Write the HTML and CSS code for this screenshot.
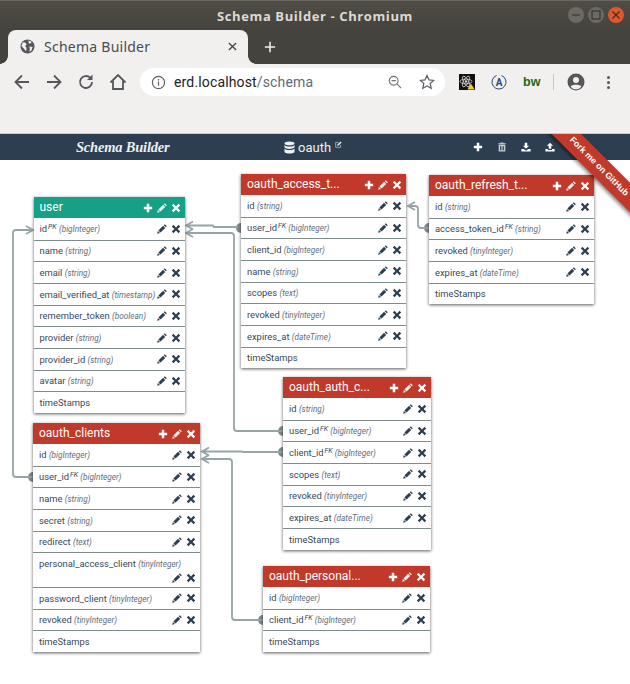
FILE: index.html
```html
<!DOCTYPE html>
<html lang="en">
<head>
    <meta charset="UTF-8">
    <meta name="viewport" content="width=device-width, initial-scale=1.0">
    <title>Schema Builder</title>
    <link rel="stylesheet" href="styles.css">
</head>
<body>
    <svg class="sprite" width="0" height="0">
        <symbol id="i-plus" viewBox="0 0 12 12"><path d="M4.5 1h3v3.5H11v3H7.5V11h-3V7.5H1v-3h3.5z"/></symbol>
        <symbol id="i-pencil" viewBox="0 0 12 12"><path d="M9.300.2l2.500 2.500-1.200 1.200-2.500-2.500zM7.300 2.200l2.500 2.500-5.600 5.600-2.500-2.500zM1.100 8.400l2.500 2.500-3.400.9z"/></symbol>
        <symbol id="i-remove" viewBox="0 0 12 12"><path d="M2.900 1L6 4.100 9.100 1 11 2.900 7.900 6 11 9.100 9.100 11 6 7.900 2.900 11 1 9.100 4.100 6 1 2.900z"/></symbol>
        <symbol id="i-trash" viewBox="0 0 12 12"><path d="M4.500.5h3l.5 1h2.500v1.200h-9V1.500H4zM2 3.400h8V11.500H2zM3.800 5v5h1V5zm1.700 0v5h1V5zm1.700 0v5h1V5z" fill-rule="evenodd"/></symbol>
        <symbol id="i-download" viewBox="0 0 12 12"><path d="M4.500 1h3v3.500h2.200L6 8.200 2.300 4.500h2.200zM.5 8.500h2.800L6 10.500l2.700-2h2.800V11.500H.5z"/></symbol>
        <symbol id="i-upload" viewBox="0 0 12 12"><path d="M6 .8l3.700 3.700H7.500V8h-3V4.500H2.300zM.5 8.500h3V9.500h5V8.500h3V11.500H.5z"/></symbol>
    </svg>

    <div class="titlebar">
        <span class="window-title">Schema Builder - Chromium</span>
        <div class="window-buttons">
            <span class="win-btn"><svg viewBox="0 0 16 16"><path d="M4 8h8" /></svg></span>
            <span class="win-btn"><svg viewBox="0 0 16 16"><rect x="4" y="4" width="8" height="8"/></svg></span>
            <span class="win-btn win-close"><svg viewBox="0 0 16 16"><path d="M4.500 4.500l7 7M11.500 4.500l-7 7"/></svg></span>
        </div>
    </div>

    <div class="tabstrip">
        <div class="tab">
            <svg class="tab-globe" viewBox="0 0 16 16"><circle cx="8" cy="8" r="7.500" fill="#54565a"/><path d="M3 3.500l3 .5 1 2-1.500 1.500L7 9.500l-.5 3.500L4 10 1.500 7.500zM9 1.500l3.500 1.500-1 1.500-2 .5zM10 8l3.500.5L12 12.500l-2 1 .5-3z" fill="#f1f0ef"/></svg>
            <span class="tab-title">Schema Builder</span>
            <svg class="tab-close" viewBox="0 0 10 10"><path d="M1 1l8 8M9 1l-8 8"/></svg>
        </div>
        <svg class="new-tab" viewBox="0 0 14 14"><path d="M7 1v12M1 7h12"/></svg>
    </div>

    <div class="toolbar">
        <svg class="tool" viewBox="0 0 18 18"><path d="M16 9H3M9 2.500L2.500 9 9 15.500"/></svg>
        <svg class="tool" viewBox="0 0 18 18"><path d="M2 9h13M9 2.500L15.500 9 9 15.500"/></svg>
        <svg class="tool" viewBox="0 0 18 18"><path d="M15 9a6 6 0 1 1-1.800-4.300"/><path class="tool-fill" d="M15.500 1.500v5.500H10z"/></svg>
        <svg class="tool" viewBox="0 0 18 18"><path d="M1.500 9.500L9 2l7.500 7.500M4 8v8h10V8"/></svg>
        <div class="omnibox">
            <svg class="omni-info" viewBox="0 0 16 16"><circle cx="8" cy="8" r="6.500"/><path d="M8 7v4.500M8 4.200v1.600"/></svg>
            <span class="url">erd.localhost<span class="url-path">/schema</span></span>
            <svg class="omni-zoom" viewBox="0 0 16 16"><circle cx="6.500" cy="6.500" r="5"/><path d="M4 6.500h5M10.200 10.200L15 15"/></svg>
            <svg class="omni-star" viewBox="0 0 16 16"><path d="M8 1.500l2 4.400 4.700.5-3.500 3.200 1 4.700L8 11.900l-4.200 2.400 1-4.700L1.300 6.400 6 5.900z"/></svg>
        </div>
        <div class="ext-icons">
            <span class="ext ext-react">
                <svg viewBox="0 0 16 16"><g fill="none" stroke="#d8d8d8" stroke-width=".8"><ellipse cx="7" cy="7.500" rx="6" ry="2.400"/><ellipse cx="7" cy="7.500" rx="6" ry="2.400" transform="rotate(60 7 7.500)"/><ellipse cx="7" cy="7.500" rx="6" ry="2.400" transform="rotate(120 7 7.500)"/></g><circle cx="7" cy="7.500" r="1.200" fill="#d8d8d8"/><path d="M12 9.500l3.600 6H8.400z" fill="#f2d024"/></svg>
            </span>
            <svg class="ext" viewBox="0 0 16 16"><path d="M5.500 1.500a7 7 0 1 0 5 0" fill="none" stroke="#2b4a78" stroke-width="1"/><text x="8" y="11.500" class="ext-a">A</text></svg>
            <span class="ext ext-bw">bw</span>
            <span class="tool-divider"></span>
            <svg class="ext ext-avatar" viewBox="0 0 18 18"><circle cx="9" cy="9" r="8.500" fill="#54565a"/><circle cx="9" cy="7" r="3" fill="#f1f0ef"/><path d="M3.500 13.500c1.500-2.500 9.500-2.500 11 0-1.500 2-3.500 2.800-5.500 2.800s-4-.8-5.500-2.800z" fill="#f1f0ef"/></svg>
            <span class="kebab"><i></i><i></i><i></i></span>
        </div>
    </div>

    <div class="page">
        <nav class="topnav">
            <div class="brand">Schema Builder</div>
            <div class="db-name">
                <svg class="db-icon" viewBox="0 0 12 14"><path d="M6 .5c3 0 5.500.8 5.500 2s-2.500 2-5.500 2-5.500-.8-5.500-2 2.500-2 5.500-2zM.5 4.200C1.500 5.400 3.500 5.800 6 5.800s4.500-.4 5.500-1.600v2.300c0 1.200-2.500 2-5.500 2s-5.500-.8-5.500-2zM.5 8.100C1.500 9.300 3.500 9.700 6 9.700s4.500-.4 5.500-1.600v3.400c0 1.200-2.500 2-5.500 2s-5.500-.8-5.500-2z"/></svg>
                <span>oauth</span>
                <svg class="edit-icon" viewBox="0 0 10 10"><path d="M8 5.500V9H1V2h4" fill="none" stroke="currentColor" stroke-width=".8"/><path d="M3.500 5L8 .6 9.500 2 5 6.500l-2 .4z"/></svg>
            </div>
            <div class="nav-actions">
                <svg class="ico"><use href="#i-plus"/></svg>
                <svg class="ico ico-muted"><use href="#i-trash"/></svg>
                <svg class="ico"><use href="#i-download"/></svg>
                <svg class="ico"><use href="#i-upload"/></svg>
            </div>
        </nav>

        <div class="ribbon">Fork me on GitHub</div>

        <main class="canvas">
            <!-- relations, drawn in page coordinates -->
            <svg class="links" width="630" height="524" viewBox="0 160 630 524">
                <g class="dots">
                    <circle cx="33" cy="477" r="5"/>
                    <circle cx="241" cy="228" r="5"/>
                    <circle cx="283" cy="431" r="5"/>
                    <circle cx="283" cy="452" r="5"/>
                    <circle cx="263" cy="620" r="5"/>
                    <circle cx="429" cy="228" r="5"/>
                </g>
                <g class="wires">
                    <path d="M33 477H16q-3 0-3-3V233q0-3 3-3H33M26 226l7 4-7 4"/>
                    <path d="M238 227H214l-1-1.500H186M193 221.500l-7 4 7 4"/>
                    <path d="M283 431H237q-3 0-3-3V236q0-3-3-3H186M193 229l-7 4 7 4"/>
                    <path d="M283 452H243l-1-.500H202M209 447.500l-7 4 7 4"/>
                    <path d="M263 620H235q-3 0-3-3V462q0-3-3-3H202M209 455l-7 4 7 4"/>
                    <path d="M429 228H421q-3 0-3-3V209q0-3-3-3H408M415 202l-7 4 7 4"/>
                </g>
            </svg>

            <section class="tbl tbl-user">
                <header class="tbl-head tbl-head-green">
                    <span class="tbl-name">user</span>
                    <span class="acts"><svg class="ico"><use href="#i-plus"/></svg><svg class="ico"><use href="#i-pencil"/></svg><svg class="ico"><use href="#i-remove"/></svg></span>
                </header>
                <div class="row"><span>id<sup>PK</sup> <em>(bigInteger)</em></span><span class="acts"><svg class="ico"><use href="#i-pencil"/></svg><svg class="ico"><use href="#i-remove"/></svg></span></div>
                <div class="row"><span>name <em>(string)</em></span><span class="acts"><svg class="ico"><use href="#i-pencil"/></svg><svg class="ico"><use href="#i-remove"/></svg></span></div>
                <div class="row"><span>email <em>(string)</em></span><span class="acts"><svg class="ico"><use href="#i-pencil"/></svg><svg class="ico"><use href="#i-remove"/></svg></span></div>
                <div class="row"><span>email_verified_at <em>(timestamp)</em></span><span class="acts"><svg class="ico"><use href="#i-pencil"/></svg><svg class="ico"><use href="#i-remove"/></svg></span></div>
                <div class="row"><span>remember_token <em>(boolean)</em></span><span class="acts"><svg class="ico"><use href="#i-pencil"/></svg><svg class="ico"><use href="#i-remove"/></svg></span></div>
                <div class="row"><span>provider <em>(string)</em></span><span class="acts"><svg class="ico"><use href="#i-pencil"/></svg><svg class="ico"><use href="#i-remove"/></svg></span></div>
                <div class="row"><span>provider_id <em>(string)</em></span><span class="acts"><svg class="ico"><use href="#i-pencil"/></svg><svg class="ico"><use href="#i-remove"/></svg></span></div>
                <div class="row"><span>avatar <em>(string)</em></span><span class="acts"><svg class="ico"><use href="#i-pencil"/></svg><svg class="ico"><use href="#i-remove"/></svg></span></div>
                <div class="row"><span>timeStamps</span></div>
            </section>

            <section class="tbl tbl-clients">
                <header class="tbl-head">
                    <span class="tbl-name">oauth_clients</span>
                    <span class="acts"><svg class="ico"><use href="#i-plus"/></svg><svg class="ico"><use href="#i-pencil"/></svg><svg class="ico"><use href="#i-remove"/></svg></span>
                </header>
                <div class="row"><span>id <em>(bigInteger)</em></span><span class="acts"><svg class="ico"><use href="#i-pencil"/></svg><svg class="ico"><use href="#i-remove"/></svg></span></div>
                <div class="row"><span>user_id<sup>FK</sup> <em>(bigInteger)</em></span><span class="acts"><svg class="ico"><use href="#i-pencil"/></svg><svg class="ico"><use href="#i-remove"/></svg></span></div>
                <div class="row"><span>name <em>(string)</em></span><span class="acts"><svg class="ico"><use href="#i-pencil"/></svg><svg class="ico"><use href="#i-remove"/></svg></span></div>
                <div class="row"><span>secret <em>(string)</em></span><span class="acts"><svg class="ico"><use href="#i-pencil"/></svg><svg class="ico"><use href="#i-remove"/></svg></span></div>
                <div class="row"><span>redirect <em>(text)</em></span><span class="acts"><svg class="ico"><use href="#i-pencil"/></svg><svg class="ico"><use href="#i-remove"/></svg></span></div>
                <div class="row"><span>personal_access_client <em>(tinyInteger)</em></span><span class="acts"><svg class="ico"><use href="#i-pencil"/></svg><svg class="ico"><use href="#i-remove"/></svg></span></div>
                <div class="row"><span>password_client <em>(tinyInteger)</em></span><span class="acts"><svg class="ico"><use href="#i-pencil"/></svg><svg class="ico"><use href="#i-remove"/></svg></span></div>
                <div class="row"><span>revoked <em>(tinyInteger)</em></span><span class="acts"><svg class="ico"><use href="#i-pencil"/></svg><svg class="ico"><use href="#i-remove"/></svg></span></div>
                <div class="row"><span>timeStamps</span></div>
            </section>

            <section class="tbl tbl-access">
                <header class="tbl-head">
                    <span class="tbl-name">oauth_access_t...</span>
                    <span class="acts"><svg class="ico"><use href="#i-plus"/></svg><svg class="ico"><use href="#i-pencil"/></svg><svg class="ico"><use href="#i-remove"/></svg></span>
                </header>
                <div class="row"><span>id <em>(string)</em></span><span class="acts"><svg class="ico"><use href="#i-pencil"/></svg><svg class="ico"><use href="#i-remove"/></svg></span></div>
                <div class="row"><span>user_id<sup>FK</sup> <em>(bigInteger)</em></span><span class="acts"><svg class="ico"><use href="#i-pencil"/></svg><svg class="ico"><use href="#i-remove"/></svg></span></div>
                <div class="row"><span>client_id <em>(bigInteger)</em></span><span class="acts"><svg class="ico"><use href="#i-pencil"/></svg><svg class="ico"><use href="#i-remove"/></svg></span></div>
                <div class="row"><span>name <em>(string)</em></span><span class="acts"><svg class="ico"><use href="#i-pencil"/></svg><svg class="ico"><use href="#i-remove"/></svg></span></div>
                <div class="row"><span>scopes <em>(text)</em></span><span class="acts"><svg class="ico"><use href="#i-pencil"/></svg><svg class="ico"><use href="#i-remove"/></svg></span></div>
                <div class="row"><span>revoked <em>(tinyInteger)</em></span><span class="acts"><svg class="ico"><use href="#i-pencil"/></svg><svg class="ico"><use href="#i-remove"/></svg></span></div>
                <div class="row"><span>expires_at <em>(dateTime)</em></span><span class="acts"><svg class="ico"><use href="#i-pencil"/></svg><svg class="ico"><use href="#i-remove"/></svg></span></div>
                <div class="row"><span>timeStamps</span></div>
            </section>

            <section class="tbl tbl-refresh">
                <header class="tbl-head">
                    <span class="tbl-name">oauth_refresh_t...</span>
                    <span class="acts"><svg class="ico"><use href="#i-plus"/></svg><svg class="ico"><use href="#i-pencil"/></svg><svg class="ico"><use href="#i-remove"/></svg></span>
                </header>
                <div class="row"><span>id <em>(string)</em></span><span class="acts"><svg class="ico"><use href="#i-pencil"/></svg><svg class="ico"><use href="#i-remove"/></svg></span></div>
                <div class="row"><span>access_token_id<sup>FK</sup> <em>(string)</em></span><span class="acts"><svg class="ico"><use href="#i-pencil"/></svg><svg class="ico"><use href="#i-remove"/></svg></span></div>
                <div class="row"><span>revoked <em>(tinyInteger)</em></span><span class="acts"><svg class="ico"><use href="#i-pencil"/></svg><svg class="ico"><use href="#i-remove"/></svg></span></div>
                <div class="row"><span>expires_at <em>(dateTime)</em></span><span class="acts"><svg class="ico"><use href="#i-pencil"/></svg><svg class="ico"><use href="#i-remove"/></svg></span></div>
                <div class="row"><span>timeStamps</span></div>
            </section>

            <section class="tbl tbl-auth">
                <header class="tbl-head">
                    <span class="tbl-name">oauth_auth_c...</span>
                    <span class="acts"><svg class="ico"><use href="#i-plus"/></svg><svg class="ico"><use href="#i-pencil"/></svg><svg class="ico"><use href="#i-remove"/></svg></span>
                </header>
                <div class="row"><span>id <em>(string)</em></span><span class="acts"><svg class="ico"><use href="#i-pencil"/></svg><svg class="ico"><use href="#i-remove"/></svg></span></div>
                <div class="row"><span>user_id<sup>FK</sup> <em>(bigInteger)</em></span><span class="acts"><svg class="ico"><use href="#i-pencil"/></svg><svg class="ico"><use href="#i-remove"/></svg></span></div>
                <div class="row"><span>client_id<sup>FK</sup> <em>(bigInteger)</em></span><span class="acts"><svg class="ico"><use href="#i-pencil"/></svg><svg class="ico"><use href="#i-remove"/></svg></span></div>
                <div class="row"><span>scopes <em>(text)</em></span><span class="acts"><svg class="ico"><use href="#i-pencil"/></svg><svg class="ico"><use href="#i-remove"/></svg></span></div>
                <div class="row"><span>revoked <em>(tinyInteger)</em></span><span class="acts"><svg class="ico"><use href="#i-pencil"/></svg><svg class="ico"><use href="#i-remove"/></svg></span></div>
                <div class="row"><span>expires_at <em>(dateTime)</em></span><span class="acts"><svg class="ico"><use href="#i-pencil"/></svg><svg class="ico"><use href="#i-remove"/></svg></span></div>
                <div class="row"><span>timeStamps</span></div>
            </section>

            <section class="tbl tbl-personal">
                <header class="tbl-head">
                    <span class="tbl-name">oauth_personal...</span>
                    <span class="acts"><svg class="ico"><use href="#i-plus"/></svg><svg class="ico"><use href="#i-pencil"/></svg><svg class="ico"><use href="#i-remove"/></svg></span>
                </header>
                <div class="row"><span>id <em>(bigInteger)</em></span><span class="acts"><svg class="ico"><use href="#i-pencil"/></svg><svg class="ico"><use href="#i-remove"/></svg></span></div>
                <div class="row"><span>client_id<sup>FK</sup> <em>(bigInteger)</em></span><span class="acts"><svg class="ico"><use href="#i-pencil"/></svg><svg class="ico"><use href="#i-remove"/></svg></span></div>
                <div class="row"><span>timeStamps</span></div>
            </section>
        </main>
    </div>
</body>
</html>
```

FILE: styles.css
```css
* {
    margin: 0;
    padding: 0;
    box-sizing: border-box;
}

html, body {
    height: 684px;
    overflow: hidden;
}

body {
    background-color: #ffffff;
    font-family: Roboto, 'Liberation Sans', sans-serif;
    color: #2c3e50;
    display: flex;
    flex-direction: column;
}

.sprite {
    display: block;
    height: 0;
}

/* window chrome */
.titlebar {
    height: 30px;
    flex: none;
    display: flex;
    align-items: center;
    justify-content: center;
    position: relative;
    background: linear-gradient(#504d46, #45433d);
    border-top: 1px solid #6a675f;
}

.window-title {
    font-family: 'Open Sans', sans-serif;
    font-size: 13px;
    font-weight: 700;
    letter-spacing: 0.6px;
    color: #dcdad5;
}

.window-buttons {
    position: absolute;
    right: 6px;
    top: 6px;
    display: flex;
    gap: 4px;
}

.win-btn {
    width: 16px;
    height: 16px;
    border-radius: 50%;
    background: #6c6a64;
    display: block;
}

.win-btn svg {
    display: block;
    fill: none;
    stroke: #35342f;
    stroke-width: 1.2;
}

.win-close {
    background: #e2562a;
}

.tabstrip {
    height: 34px;
    flex: none;
    background: #45433d;
    display: flex;
    align-items: flex-end;
    padding-left: 8px;
}

.tab {
    width: 240px;
    height: 34px;
    position: relative;
    background: #f1f0ef;
    border-radius: 8px 8px 0 0;
    display: flex;
    align-items: center;
    padding: 0 10px 1px 12px;
}

.tab::before,
.tab::after {
    content: "";
    position: absolute;
    bottom: 0;
    width: 8px;
    height: 8px;
}

.tab::before {
    left: -8px;
    background: radial-gradient(circle at 0 0, transparent 7.500px, #f1f0ef 8px);
}

.tab::after {
    right: -8px;
    background: radial-gradient(circle at 100% 0, transparent 7.500px, #f1f0ef 8px);
}

.tab-globe {
    width: 15px;
    height: 15px;
    flex: none;
}

.tab-title {
    font-family: 'Noto Sans', sans-serif;
    font-size: 14px;
    letter-spacing: 0.25px;
    color: #4a4c50;
    margin-left: 9px;
    flex: 1;
}

.tab-close {
    width: 9px;
    height: 9px;
    fill: none;
    stroke: #45474a;
    stroke-width: 1.5;
    margin-right: 1px;
}

.new-tab {
    width: 12px;
    height: 12px;
    margin: 0 0 11px 16px;
    fill: none;
    stroke: #f1f0ef;
    stroke-width: 1.8;
}

.toolbar {
    height: 70px;
    flex: none;
    background: #f1f0ef;
    display: flex;
    align-items: flex-start;
    padding: 4px 0 0 13px;
    gap: 14px;
    border-bottom: 1px solid #c9c9c9;
}

.tool {
    width: 18px;
    height: 18px;
    margin-top: 5px;
    fill: none;
    stroke: #55575b;
    stroke-width: 1.8;
}

.tool-fill {
    fill: #55575b;
    stroke: none;
}

.omnibox {
    width: 305px;
    height: 28px;
    background: #ffffff;
    border-radius: 14px;
    display: flex;
    align-items: center;
    padding: 0 10px 0 11px;
    margin-left: -1px;
}

.omni-info {
    width: 15px;
    height: 15px;
    fill: none;
    stroke: #5f6368;
    stroke-width: 1.300;
}

.url {
    font-size: 14px;
    letter-spacing: 0.15px;
    color: #202124;
    margin-left: 8px;
    flex: 1;
}

.url-path {
    color: #5f6b78;
}

.omni-zoom {
    width: 14px;
    height: 14px;
    fill: none;
    stroke: #6f7377;
    stroke-width: 1.300;
    margin-right: 17px;
}

.omni-star {
    width: 16px;
    height: 16px;
    fill: none;
    stroke: #5f6368;
    stroke-width: 1.300;
}

.ext-icons {
    display: flex;
    align-items: center;
    height: 28px;
}

.ext {
    width: 16px;
    height: 16px;
    display: block;
    flex: none;
    margin-right: 16px;
}

.ext-react {
    background: #111111;
}

.ext-react svg {
    display: block;
}

.ext-a {
    font-family: Roboto, sans-serif;
    font-size: 10px;
    font-weight: 700;
    fill: #2b4a78;
    text-anchor: middle;
}

.ext-bw {
    font-family: 'Liberation Sans', sans-serif;
    font-size: 12.500px;
    font-weight: 700;
    line-height: 16px;
    color: #1a6b0c;
}

.tool-divider {
    width: 1px;
    height: 16px;
    background: #c6c6c6;
    margin: 0 13px 0 -2px;
}

.ext-avatar {
    width: 18px;
    height: 18px;
    margin-right: 22px;
}

.kebab {
    display: flex;
    flex-direction: column;
    gap: 2px;
}

.kebab i {
    width: 3px;
    height: 3px;
    border-radius: 50%;
    background: #55575b;
    display: block;
}

/* app */
.page {
    flex: 1;
    position: relative;
    overflow: hidden;
    display: flex;
    flex-direction: column;
}

.topnav {
    height: 26px;
    flex: none;
    background: #2c3e50;
    color: #ecf0f1;
    display: flex;
    align-items: center;
    padding-left: 76px;
}

.brand {
    width: 208px;
    font-family: 'Liberation Serif', serif;
    font-size: 14.500px;
    font-weight: 700;
    font-style: italic;
    letter-spacing: -0.2px;
    color: #ecf0f1;
}

.db-name {
    width: 189px;
    display: flex;
    align-items: center;
    font-size: 13px;
    color: #ecf0f1;
}

.db-icon {
    width: 11px;
    height: 13px;
    fill: #ecf0f1;
    margin-right: 3px;
}

.edit-icon {
    width: 7px;
    height: 7px;
    fill: #ecf0f1;
    margin: -6px 0 0 4px;
}

.nav-actions {
    display: flex;
    gap: 14px;
    color: #ffffff;
}

.ico-muted {
    color: #c3ccd2;
}

.ribbon {
    position: absolute;
    left: 524px;
    top: 22px;
    width: 150px;
    height: 21px;
    line-height: 21px;
    text-align: center;
    transform: rotate(45deg);
    background: #c0392b;
    color: #ffffff;
    font-family: 'Liberation Sans', sans-serif;
    font-size: 8.800px;
    font-weight: 700;
    box-shadow: 0 2px 4px rgba(0, 0, 0, 0.5);
    z-index: 3;
}

.canvas {
    flex: 1;
    position: relative;
    background: #ffffff;
}

.links {
    position: absolute;
    left: 0;
    top: 0;
    display: block;
}

.wires path {
    fill: none;
    stroke: #95a5a6;
    stroke-width: 1.800;
}

.dots circle {
    fill: #7f8c8d;
}

/* schema tables */
.tbl {
    position: absolute;
    background: #ffffff;
    box-shadow: 0 1px 3px rgba(0, 0, 0, 0.65);
    z-index: 1;
}

.tbl-user { left: 33.500px; top: 37px; width: 151px; }
.tbl-clients { left: 33px; top: 263px; width: 167px; }
.tbl-access { left: 241px; top: 14px; width: 165px; }
.tbl-refresh { left: 429px; top: 15px; width: 165px; }
.tbl-auth { left: 283px; top: 217px; width: 148px; }
.tbl-personal { left: 263px; top: 406px; width: 167px; }

.tbl-head {
    height: 21px;
    background: #c0392b;
    color: #ffffff;
    display: flex;
    align-items: center;
    justify-content: space-between;
    padding: 0 4px 0 6px;
}

.tbl-head-green {
    background: #16a085;
}

.tbl-name {
    font-size: 12px;
    line-height: 21px;
    white-space: nowrap;
}

.acts {
    display: flex;
    align-items: center;
    gap: 4px;
    color: #2c3e50;
}

.tbl-head .acts {
    color: #ffffff;
}

.tbl-head .acts .ico:nth-child(2) {
    color: #ecf0f1;
}

.ico {
    width: 10px;
    height: 10px;
    fill: currentColor;
    display: block;
}

.row {
    min-height: 21.670px;
    display: flex;
    flex-wrap: wrap;
    align-items: center;
    justify-content: space-between;
    padding: 2.830px 4px 2.840px 6px;
    border-top: 1px solid #7f8c8d;
    font-size: 9.400px;
    line-height: 15px;
    color: #34495e;
}

.tbl-head + .row {
    border-top: 0;
}

.row .acts {
    margin-left: auto;
    height: 13px;
}

.row em {
    font-size: 8.200px;
    line-height: 1;
    color: #5d6d7e;
}

.row sup {
    font-size: 7px;
    font-style: italic;
    line-height: 0;
    vertical-align: 3.500px;
    margin-left: 1px;
}
```
